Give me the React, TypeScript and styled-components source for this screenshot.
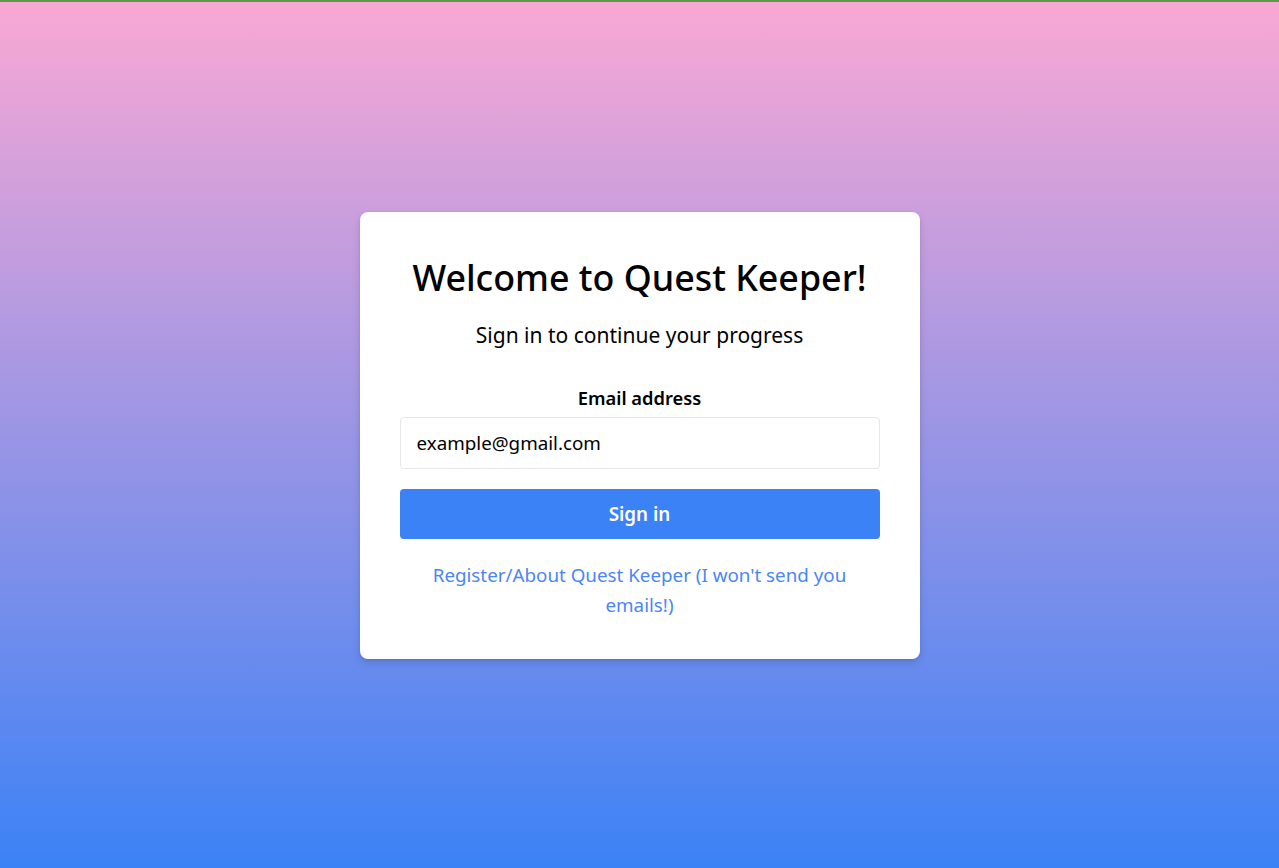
import React from "react";
import styled, { createGlobalStyle } from "styled-components";

const Global = createGlobalStyle`
  * { box-sizing: border-box; }
  html, body { margin: 0; padding: 0; }
  body {
    font-family: "Noto Sans", "Open Sans", sans-serif;
    color: #000;
  }
`;

const Page = styled.div`
  min-height: 100vh;
  border-top: 2px solid #5b9a48;
  background: linear-gradient(to bottom, #f9a8d4, #3b82f6);
  display: flex;
  align-items: center;
  justify-content: center;
`;

const Card = styled.div`
  width: 560px;
  background: #ffffff;
  border-radius: 8px;
  box-shadow: 0 4px 8px rgba(0, 0, 0, 0.12), 0 1px 3px rgba(0, 0, 0, 0.08);
  padding: 41px 40px 39px;
  display: flex;
  flex-direction: column;
  text-align: center;
`;

const Title = styled.h1`
  margin: 0;
  font-size: 35.8px;
  line-height: 48px;
  font-weight: 500;
`;

const Subtitle = styled.p`
  margin: 20px 0 0;
  font-size: 21px;
  line-height: 28px;
  font-weight: 400;
`;

const Form = styled.form`
  margin-top: 35px;
  display: flex;
  flex-direction: column;
`;

const Label = styled.label`
  font-size: 18.3px;
  line-height: 28px;
  font-weight: 600;
  margin-bottom: 5px;
`;

const Input = styled.input`
  height: 52px;
  width: 100%;
  border: 1px solid #e5e7eb;
  border-radius: 4px;
  padding: 0 16px;
  font-family: inherit;
  font-size: 18.8px;
  color: #000;
  outline: none;
`;

const Button = styled.button`
  margin-top: 20px;
  height: 50px;
  width: 100%;
  border: none;
  border-radius: 4px;
  background: #3b82f6;
  color: #ffffff;
  font-family: inherit;
  font-size: 18.8px;
  font-weight: 600;
  cursor: pointer;
`;

const LinkText = styled.a`
  margin-top: 21px;
  font-size: 18.8px;
  line-height: 30px;
  color: #4a86f6;
  text-decoration: none;
  padding: 0 20px;
`;

export default function App() {
  return (
    <>
      <Global />
      <Page>
        <Card>
          <Title>Welcome to Quest Keeper!</Title>
          <Subtitle>Sign in to continue your progress</Subtitle>
          <Form onSubmit={(e) => e.preventDefault()}>
            <Label htmlFor="email">Email address</Label>
            <Input id="email" type="email" defaultValue="example@gmail.com" />
            <Button type="submit">Sign in</Button>
            <LinkText href="#">Register/About Quest Keeper (I won't send you emails!)</LinkText>
          </Form>
        </Card>
      </Page>
    </>
  );
}
